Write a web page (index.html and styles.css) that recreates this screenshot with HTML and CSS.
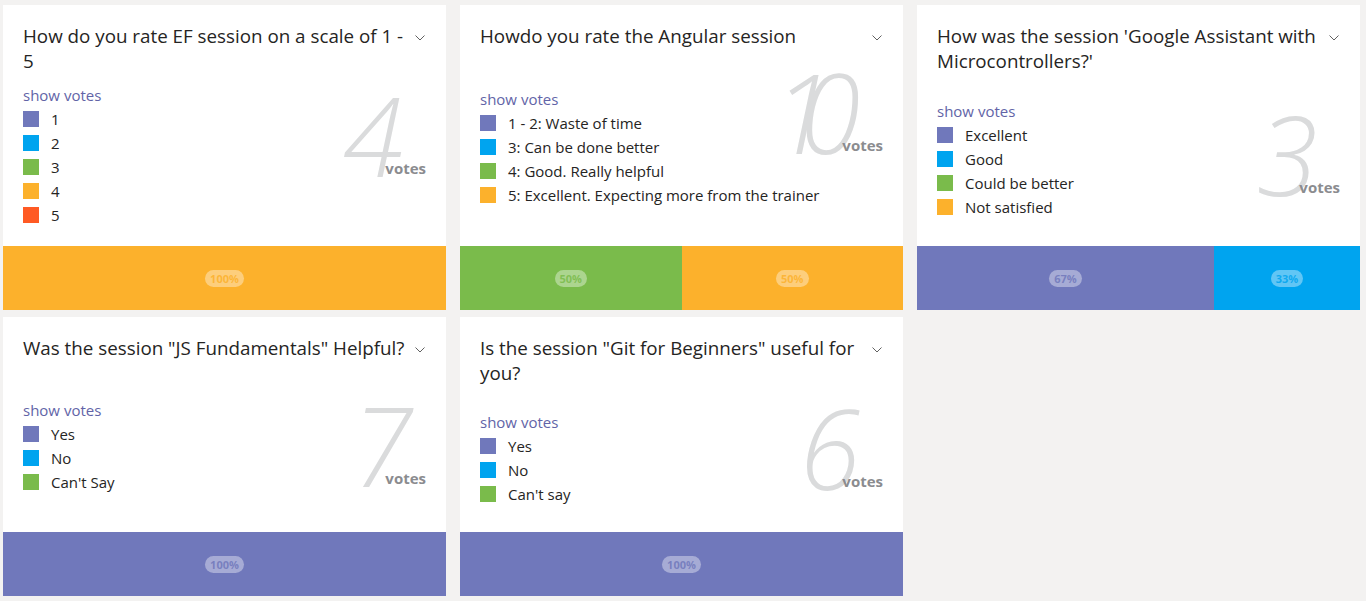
FILE: index.html
```html
<!DOCTYPE html>
<html lang="en">
<head>
<meta charset="utf-8">
<title>Polls</title>
<link rel="stylesheet" href="styles.css">
</head>
<body>
<main class="board">

  <section class="card">
    <header class="card-head">
      <h2 class="title">How do you rate EF session on a scale of 1 - 5</h2>
      <svg class="chev" width="10" height="6" viewBox="0 0 10 6"><polyline points="0.5,0.5 5,5 9.5,0.5" fill="none" stroke="#616161" stroke-width="1"/></svg>
    </header>
    <div class="card-body body-up">
      <div class="legend">
        <a class="show-votes">show votes</a>
        <ul class="options">
          <li><span class="sw c-purple"></span>1</li>
          <li><span class="sw c-blue"></span>2</li>
          <li><span class="sw c-green"></span>3</li>
          <li><span class="sw c-orange"></span>4</li>
          <li><span class="sw c-red"></span>5</li>
        </ul>
      </div>
      <div class="count count-a"><span class="num">4</span><span class="lbl">votes</span></div>
    </div>
    <div class="bar">
      <div class="seg c-orange" style="flex:100"><span class="pct">100%</span></div>
    </div>
  </section>

  <section class="card">
    <header class="card-head">
      <h2 class="title">Howdo you rate the Angular session</h2>
      <svg class="chev" width="10" height="6" viewBox="0 0 10 6"><polyline points="0.5,0.5 5,5 9.5,0.5" fill="none" stroke="#616161" stroke-width="1"/></svg>
    </header>
    <div class="card-body">
      <div class="legend">
        <a class="show-votes">show votes</a>
        <ul class="options">
          <li><span class="sw c-purple"></span>1 - 2: Waste of time</li>
          <li><span class="sw c-blue"></span>3: Can be done better</li>
          <li><span class="sw c-green"></span>4: Good. Really helpful</li>
          <li><span class="sw c-orange"></span>5: Excellent. Expecting more from the trainer</li>
        </ul>
      </div>
      <div class="count count-b"><span class="num">10</span><span class="lbl">votes</span></div>
    </div>
    <div class="bar">
      <div class="seg c-green" style="flex:50"><span class="pct">50%</span></div>
      <div class="seg c-orange" style="flex:50"><span class="pct">50%</span></div>
    </div>
  </section>

  <section class="card">
    <header class="card-head">
      <h2 class="title">How was the session 'Google Assistant with Microcontrollers?'</h2>
      <svg class="chev" width="10" height="6" viewBox="0 0 10 6"><polyline points="0.5,0.5 5,5 9.5,0.5" fill="none" stroke="#616161" stroke-width="1"/></svg>
    </header>
    <div class="card-body">
      <div class="legend">
        <a class="show-votes">show votes</a>
        <ul class="options">
          <li><span class="sw c-purple"></span>Excellent</li>
          <li><span class="sw c-blue"></span>Good</li>
          <li><span class="sw c-green"></span>Could be better</li>
          <li><span class="sw c-orange"></span>Not satisfied</li>
        </ul>
      </div>
      <div class="count count-c"><span class="num">3</span><span class="lbl">votes</span></div>
    </div>
    <div class="bar">
      <div class="seg c-purple" style="flex:67"><span class="pct">67%</span></div>
      <div class="seg c-blue" style="flex:33"><span class="pct">33%</span></div>
    </div>
  </section>

  <section class="card">
    <header class="card-head">
      <h2 class="title">Was the session "JS Fundamentals" Helpful?</h2>
      <svg class="chev" width="10" height="6" viewBox="0 0 10 6"><polyline points="0.5,0.5 5,5 9.5,0.5" fill="none" stroke="#616161" stroke-width="1"/></svg>
    </header>
    <div class="card-body">
      <div class="legend">
        <a class="show-votes">show votes</a>
        <ul class="options">
          <li><span class="sw c-purple"></span>Yes</li>
          <li><span class="sw c-blue"></span>No</li>
          <li><span class="sw c-green"></span>Can't Say</li>
        </ul>
      </div>
      <div class="count count-d"><span class="num">7</span><span class="lbl">votes</span></div>
    </div>
    <div class="bar">
      <div class="seg c-purple" style="flex:100"><span class="pct">100%</span></div>
    </div>
  </section>

  <section class="card">
    <header class="card-head">
      <h2 class="title">Is the session "Git for Beginners" useful for you?</h2>
      <svg class="chev" width="10" height="6" viewBox="0 0 10 6"><polyline points="0.5,0.5 5,5 9.5,0.5" fill="none" stroke="#616161" stroke-width="1"/></svg>
    </header>
    <div class="card-body">
      <div class="legend">
        <a class="show-votes">show votes</a>
        <ul class="options">
          <li><span class="sw c-purple"></span>Yes</li>
          <li><span class="sw c-blue"></span>No</li>
          <li><span class="sw c-green"></span>Can't say</li>
        </ul>
      </div>
      <div class="count count-e"><span class="num">6</span><span class="lbl">votes</span></div>
    </div>
    <div class="bar">
      <div class="seg c-purple" style="flex:100"><span class="pct">100%</span></div>
    </div>
  </section>

</main>
</body>
</html>
```
FILE: styles.css
```css
* { box-sizing: border-box; }
html, body { margin: 0; padding: 0; }
body {
  background: #f3f2f1;
  font-family: "Open Sans", "Noto Sans", "Liberation Sans", sans-serif;
  color: #252423;
  width: 1366px;
  height: 601px;
  overflow: hidden;
}
.board {
  display: grid;
  grid-template-columns: repeat(3, 443px);
  grid-template-rows: 305px 279px;
  column-gap: 14px;
  row-gap: 7px;
  padding: 5px 0 0 3px;
}
.card {
  background: #fff;
  display: flex;
  flex-direction: column;
}
.card-head {
  display: flex;
  align-items: flex-start;
  gap: 8px;
  padding: 19px 21px 0 20px;
}
.title {
  flex: 1;
  margin: 0;
  font-size: 18.8px;
  font-weight: 400;
  line-height: 25px;
  color: #252423;
}
.chev {
  flex: none;
  margin-top: 11px;
}
.card-body {
  flex: 1;
  display: flex;
  align-items: center;
  padding: 0 20px;
}
.body-up { padding-bottom: 8px; }
.legend {
  flex: 1;
  min-width: 0;
  display: flex;
  flex-direction: column;
  align-items: flex-start;
}
.show-votes {
  font-size: 15px;
  line-height: 20px;
  color: #6264a7;
  margin-bottom: 2px;
}
.options {
  list-style: none;
  margin: 0;
  padding: 0;
}
.options li {
  display: flex;
  align-items: center;
  height: 24px;
  font-size: 15px;
  color: #252423;
  white-space: nowrap;
}
.sw {
  width: 16px;
  height: 16px;
  margin-right: 12px;
  flex: none;
}
.count {
  align-self: flex-start;
  display: flex;
  align-items: baseline;
  flex: none;
}
.num {
  font-size: 110px;
  line-height: 0.8;
  font-weight: 300;
  font-style: italic;
  color: #dadbdc;
  letter-spacing: -0.3em;
}
.lbl {
  position: relative;
  top: -3px;
  font-size: 15px;
  font-weight: 700;
  color: #8b8c8f;
  margin-left: 15px;
}
.count-a { margin-top: 16px; }
.count-b { margin-top: 18px; }
.count-c { margin-top: 35px; }
.count-d { margin-top: 39px; }
.count-d .lbl { margin-left: 6px; }
.count-e { margin-top: 17px; }
.bar {
  height: 64px;
  display: flex;
  flex: none;
}
.seg {
  display: flex;
  align-items: center;
  justify-content: center;
  background-color: rgb(var(--c));
}
.pct {
  font-size: 11px;
  font-weight: 700;
  line-height: 17px;
  padding: 0 5px;
  border-radius: 9px;
  background: rgba(255, 255, 255, 0.38);
  color: rgba(var(--c), 0.85);
}
.sw { background-color: rgb(var(--c)); }
.c-purple { --c: 112, 120, 187; }
.c-blue { --c: 0, 164, 239; }
.c-green { --c: 122, 187, 75; }
.c-orange { --c: 252, 177, 44; }
.c-red { --c: 255, 90, 36; }
```
